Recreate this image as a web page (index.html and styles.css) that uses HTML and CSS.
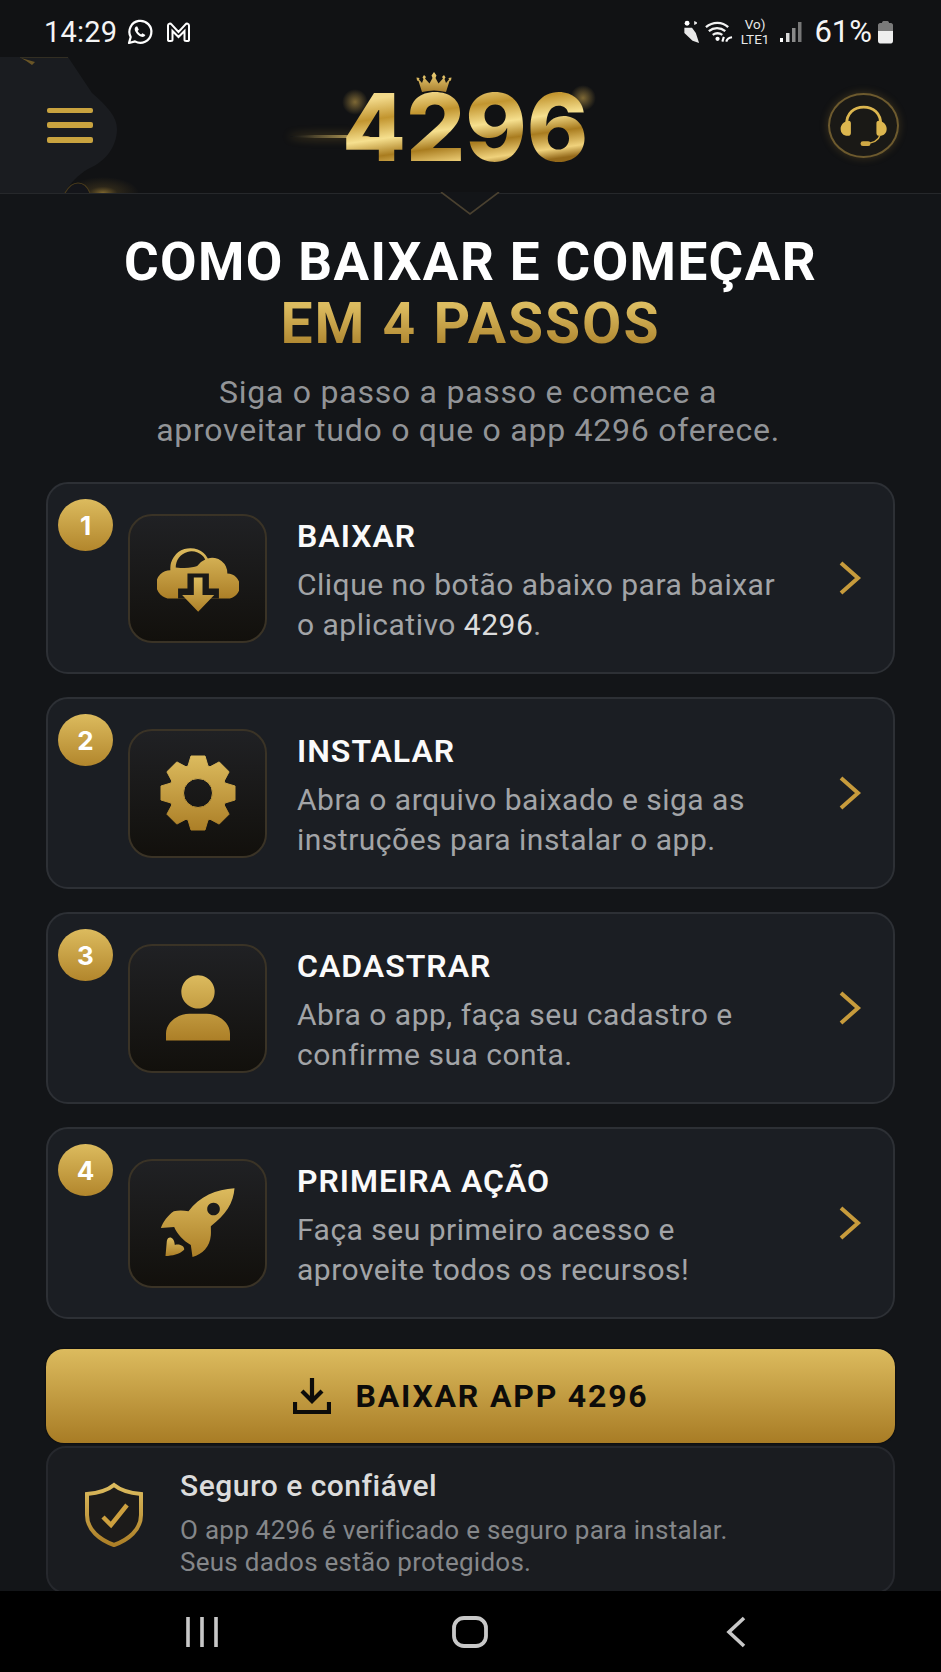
FILE: index.html
```html
<!DOCTYPE html>
<html lang="pt">
<head>
<meta charset="utf-8">
<title>4296</title>
<link rel="stylesheet" href="styles.css">
</head>
<body>
<svg class="defs" aria-hidden="true"><defs>
<linearGradient id="gold" x1="0" y1="0" x2="0" y2="1"><stop offset="0" stop-color="#dcbb5e"/><stop offset="1" stop-color="#ac7f27"/></linearGradient>
<linearGradient id="goldbright" x1="0" y1="0" x2="0" y2="1"><stop offset="0" stop-color="#f0d278"/><stop offset="1" stop-color="#a87f2e"/></linearGradient>
<radialGradient id="glow"><stop offset="0" stop-color="#d9ad45" stop-opacity=".55"/><stop offset=".4" stop-color="#b98f35" stop-opacity=".16"/><stop offset="1" stop-color="#b98f35" stop-opacity="0"/></radialGradient>
</defs></svg>
<div class="page">
  <div class="status">
    <div class="status-group">
      <span class="clock">14:29</span>
      <svg class="st-wa" viewBox="0 0 28 28"><path d="M3 25l1.700-6A11 11 0 1 1 9 23.400z" fill="none" stroke="#fff" stroke-width="2.200" stroke-linejoin="round"/><path d="M10 8.500c-1.500 1-1.700 3-.6 5 1.300 2.500 3.500 4.500 6 5.300 1.800.5 3.400-.3 4-1.800l-3-1.800-1.300 1.300c-1.500-.7-2.800-2-3.500-3.500l1.200-1.300-1.500-3.200z" fill="#fff"/></svg>
      <svg class="st-m" viewBox="0 0 26 22"><path d="M2.500 19V4.500C2.500 2.500 5 2 6 3.500L13 11l7-7.500c1-1.500 3.500-1 3.500 1V19c0 1-1.200 1-1.800 1h-1c-1 0-1.700-.3-1.700-1.200V10l-6 6-6-6v8.800c0 .9-.7 1.200-1.700 1.200h-1c-.6 0-1.800 0-1.800-1z" fill="none" stroke="#fff" stroke-width="2"/></svg>
    </div>
    <div class="status-group right">
      <svg class="st-hand" viewBox="0 0 16 22"><circle cx="3.500" cy="3" r="2.200" fill="#fff"/><path d="M10 1l2.500 1v1.500L10 4.500zM1 7h7l3.500 5 3 9-6-2-7.500-7z" fill="#e8e8e8"/></svg>
      <svg class="st-wifi" viewBox="0 0 30 24"><path d="M2 7c7-6 17-6 23 0M5 11c5-4 12-4 17 0M9 15c3-2 7-2 10 0" fill="none" stroke="#f2f2f2" stroke-width="2.400"/><circle cx="14" cy="19" r="2.200" fill="#fff"/><path d="M19 22l1.500-5M23 22c1-3 2-4 6-4.500" fill="none" stroke="#fff" stroke-width="2.200"/></svg>
      <span class="volte"><span>Vo)</span><span>LTE1</span></span>
      <svg class="st-signal" viewBox="0 0 24 22"><rect x="1" y="17" width="3" height="4" fill="#fff"/><rect x="7" y="12" width="3.500" height="9" fill="#d8d8d8"/><rect x="13" y="7" width="3.500" height="14" fill="#8a8a8a"/><rect x="19" y="1" width="3.500" height="20" fill="#777"/></svg>
      <span class="pct">61%</span>
      <svg class="st-batt" viewBox="0 0 17 24"><path d="M5 3c0-1 .5-2 1.500-2h4c1 0 1.500 1 1.500 2h2c1 0 2 1 2 2v6H1V5c0-1 1-2 2-2z" fill="#7a7a7a"/><path d="M1 11h15v10c0 1.500-1 2.500-2 2.500H3c-1 0-2-1-2-2.500z" fill="#eee"/></svg>
    </div>
  </div>

  <header class="header">
    <svg class="hex" viewBox="0 0 140 136"><path d="M0 0H68L92 36C108 50 117 60 117 72C117 90 105 105 88 112C78 118 70 126 65 136H0z" fill="#1a1c20"/><path d="M20 0H68" stroke="#3b3525" stroke-width="1.500" fill="none"/><path d="M21 1q6 3 11 7l3-3z" fill="#6a5526"/><ellipse cx="103" cy="136" rx="36" ry="16" fill="url(#glow)"/><path d="M65 136c4-7 9-10 13-10 6 0 10 5 12 10z" fill="#14151a"/><path d="M65 136c4-7 9-10 13-10 6 0 10 5 12 10" fill="none" stroke="#4a3c1c" stroke-width="1.200"/></svg>
    <button class="burger"><i></i><i></i><i></i></button>
    <div class="logo">
      <span class="spark spark-a"></span>
      <span class="spark spark-b"></span>
      <span class="flare"></span>
      <svg class="crown" viewBox="0 0 36 21"><path d="M18 0l2.500 3.500L19.500 6l3 5.500L27 6.500 26 5l2-2 1.500 2.500L28.500 7l1.500 4 3-3.500-.5-1.500 3-.5-.5 3-1.500.5L30 20q-12-3-24 0L2.500 9 1 8.500l-.500-3 3 .5-.5 1.500 3 3.500 1.500-4L6.500 5.500 8 3l2 2-1 1.500 4.500 5L16.500 6l-1-2.500z" fill="url(#goldbright)"/></svg>
      <span class="logo-text">4296</span>
    </div>
    <div class="support">
      <svg viewBox="503 277 215 196"><path d="M556 372C556 335 580 316 611 316C642 316 666 335 666 372" fill="none" stroke="#dcb64f" stroke-width="9"/><path d="M560 360c-14 3-23 15-23 26 0 12 8 22 23 22 8 0 10-4 10-10v-30c0-6-4-10-10-8zM662 360c14 3 23 15 23 26 0 12-8 22-23 22-8 0-10-4-10-10v-30c0-6 4-10 10-8z" fill="#dcb64f"/><path d="M664 405c-5 18-25 27-50 28" fill="none" stroke="#d0a945" stroke-width="5"/><rect x="601" y="426" width="32" height="15" rx="7.500" fill="#d0a945"/></svg>
    </div>
    <svg class="notch" viewBox="0 0 60 26"><path d="M2 0L30 22L58 0" fill="#131518"/><path d="M1 0L30 22L59 0" fill="none" stroke="#4a4130" stroke-width="1.600"/></svg>
  </header>

  <main class="main">
    <h1 class="title">COMO BAIXAR E COMEÇAR<span class="title-gold">EM 4 PASSOS</span></h1>
    <p class="subtitle">Siga o passo a passo e comece a<br>aproveitar tudo o que o app 4296 oferece.</p>

    <section class="steps">
      <article class="step">
        <span class="badge">1</span>
        <div class="tile">
          <svg class="ic-cloud" viewBox="380 225 245 200"><path fill="url(#gold)" d="M420 300a60 60 0 0 1 112-35 45 45 0 0 1 58 45 35 35 0 0 1 0 75H420a40 40 0 0 1 0-85z"/><path fill="#1d1c1a" d="M436 292a47 47 0 0 1 88-24q-15 6-24 20c-12 4-30 8-64 4z"/><path fill="#1a1917" d="M443 355h28v-45h64v45h30v30h-122z"/><path fill="url(#gold)" d="M490 322h26v52h35l-48 50-48-50h35z"/></svg>
        </div>
        <div class="step-text">
          <h2>BAIXAR</h2>
          <p>Clique no botão abaixo para baixar<br>o aplicativo <b>4296</b>.</p>
        </div>
        <svg class="chev" viewBox="0 0 24 36"><path d="M3 3l17 15L3 33" fill="none" stroke="#c79b3c" stroke-width="4"/></svg>
      </article>

      <article class="step">
        <span class="badge">2</span>
        <div class="tile">
          <svg class="ic-gear" viewBox="-38 -38 76 76"><path fill="url(#gold)" fill-rule="evenodd" stroke="url(#gold)" stroke-width="1" stroke-linejoin="round" d="M-10-27L-7-37H7L10-27L12-26.200L21.200-31.100L31.100-21.200L26.200-12L27-10L37-7V7L27 10L26.200 12L31.100 21.200L21.200 31.100L12 26.200L10 27L7 37H-7L-10 27L-12 26.200L-21.200 31.100L-31.100 21.200L-26.200 12L-27 10L-37 7V-7L-27-10L-26.200-12L-31.100-21.200L-21.200-31.100L-12-26.200zM0-14.500a14.500 14.500 0 1 0 0 29a14.500 14.500 0 1 0 0-29z"/></svg>
        </div>
        <div class="step-text">
          <h2>INSTALAR</h2>
          <p>Abra o arquivo baixado e siga as<br>instruções para instalar o app.</p>
        </div>
        <svg class="chev" viewBox="0 0 24 36"><path d="M3 3l17 15L3 33" fill="none" stroke="#c79b3c" stroke-width="4"/></svg>
      </article>

      <article class="step">
        <span class="badge">3</span>
        <div class="tile">
          <svg class="ic-person" viewBox="407 852 192 197"><path fill="url(#gold)" d="M503 852a50 50 0 1 1-.100 0zM407 1048v-20c0-38 40-60 70-60h52c30 0 70 22 70 60v20z"/></svg>
        </div>
        <div class="step-text">
          <h2>CADASTRAR</h2>
          <p>Abra o app, faça seu cadastro e<br>confirme sua conta.</p>
        </div>
        <svg class="chev" viewBox="0 0 24 36"><path d="M3 3l17 15L3 33" fill="none" stroke="#c79b3c" stroke-width="4"/></svg>
      </article>

      <article class="step">
        <span class="badge">4</span>
        <div class="tile">
          <svg class="ic-rocket" viewBox="388 205 224 210"><path fill="url(#gold)" fill-rule="evenodd" d="M611 206c-55 3-105 25-138 69-15-3-30-4-44 0-18 12-32 32-39 50l40-3c8 20 28 42 50 54l5 36c30-8 52-30 55-65 1-10 0-15 0-27 45-35 68-70 71-114zM548 249a19 19 0 1 0 .100 0z"/><path fill="url(#gold)" d="M404 409l4-45c3-16 22-14 24 12 14-5 30 4 28 14-14 14-36 18-56 19z"/></svg>
        </div>
        <div class="step-text">
          <h2>PRIMEIRA AÇÃO</h2>
          <p>Faça seu primeiro acesso e<br>aproveite todos os recursos!</p>
        </div>
        <svg class="chev" viewBox="0 0 24 36"><path d="M3 3l17 15L3 33" fill="none" stroke="#c79b3c" stroke-width="4"/></svg>
      </article>
    </section>

    <button class="cta">
      <svg viewBox="0 0 38 38"><path d="M19 1v22M9 14l10 10 10-10" fill="none" stroke="#0d0c0a" stroke-width="4.200"/><path d="M2 25v10h34V25" fill="none" stroke="#0d0c0a" stroke-width="4.200"/></svg>
      <span>BAIXAR APP 4296</span>
    </button>

    <section class="safe">
      <svg class="shield" viewBox="0 0 60 66"><path d="M30 3C24 8 14 11 3 12V33C3 48 16 58 30 63C44 58 57 48 57 33V12C46 11 36 8 30 3z" fill="#1c1b1a" stroke="url(#gold)" stroke-width="4"/><path d="M19 35l8 8 16-20" fill="none" stroke="#cda03f" stroke-width="4.500"/></svg>
      <div class="safe-text">
        <h3>Seguro e confiável</h3>
        <p>O app 4296 é verificado e seguro para instalar.<br>Seus dados estão protegidos.</p>
      </div>
    </section>
  </main>

  <nav class="navbar">
    <svg class="nav-recent" viewBox="0 0 34 32"><path d="M3 1v30M17 1v30M31 1v30" stroke="#c8c8c8" stroke-width="3.600" fill="none"/></svg>
    <svg class="nav-home" viewBox="0 0 36 32"><rect x="2" y="2" width="32" height="28" rx="10" fill="none" stroke="#c8c8c8" stroke-width="3.800"/></svg>
    <svg class="nav-back" viewBox="0 0 22 32"><path d="M19 2L4 16l15 14" fill="none" stroke="#c8c8c8" stroke-width="3.600"/></svg>
  </nav>
</div>
</body>
</html>
```

FILE: styles.css
```css
* { box-sizing: border-box; margin: 0; padding: 0; }
html, body { background: #131518; }
body { font-family: Roboto, "Liberation Sans", sans-serif; color: #fff; }
.defs { display: block; width: 0; height: 0; }
.page { width: 941px; height: 1672px; display: flex; flex-direction: column; overflow: hidden; background: #131518; }

.status { height: 57px; flex: none; display: flex; justify-content: space-between; align-items: center; padding: 6px 47px 0 44px; background: #111214; }
.status-group { display: flex; align-items: center; }
.clock { font-size: 29px; letter-spacing: .2px; color: #f4f4f4; }
.st-wa { width: 28px; height: 28px; margin-left: 9px; }
.st-m { width: 27px; height: 22px; margin-left: 11px; }
.st-hand { width: 18px; height: 24px; }
.st-wifi { width: 29px; height: 24px; margin-left: 3px; }
.volte { display: flex; flex-direction: column; align-items: center; font-size: 13.500px; line-height: 15px; margin-left: 8px; color: #e8e8e8; }
.st-signal { width: 24px; height: 22px; margin-left: 10px; }
.pct { font-size: 31px; margin-left: 11px; color: #f4f4f4; }
.st-batt { width: 17px; height: 24px; margin-left: 5px; }

.header { position: relative; height: 137px; flex: none; display: flex; align-items: center; justify-content: space-between; padding: 0 42px 0 47px; background: #111214; border-bottom: 1px solid #26282b; }
.hex { position: absolute; left: 0; top: 0; width: 140px; height: 136px; }
.burger { position: relative; width: 46px; height: 35px; background: none; border: 0; display: flex; flex-direction: column; justify-content: space-between; }
.burger i { display: block; height: 5.500px; border-radius: 2px; background: #c9a33f; }
.logo { position: absolute; left: 342px; top: 0; width: 248px; height: 136px; }
.crown { position: absolute; left: 74px; top: 15px; width: 36px; height: 21px; }
.spark { position: absolute; width: 26px; height: 26px; border-radius: 50%; background: radial-gradient(rgba(215,175,80,.55), rgba(215,175,80,0) 70%); }
.spark-a { left: 0; top: 32px; }
.spark-b { left: 228px; top: 28px; }
.flare { position: absolute; left: -52px; top: 78px; width: 80px; height: 3px; border-radius: 50%; background: linear-gradient(90deg, rgba(220,175,75,0), rgba(240,205,110,.9)); box-shadow: 0 0 8px 2px rgba(210,165,60,.22); }
.logo-text { position: absolute; left: 0; top: 2px; font-family: Inter, "DejaVu Sans", sans-serif; font-weight: 800; font-size: 93px; line-height: 136px; color: transparent; background: linear-gradient(172deg, #f2d98a 26%, #c2952f 38%, #f6e08f 50%, #a97c1f 60%, #f0d27c 70%, #94691a 76%); -webkit-background-clip: text; background-clip: text; }
.support { position: relative; width: 71px; height: 65px; border-radius: 50%; border: 2px solid #6d5a2e; background: #1a1916; box-shadow: 0 0 8px rgba(190,150,60,.25); display: flex; align-items: center; justify-content: center; }
.support svg { width: 100%; height: 100%; }
.notch { position: absolute; left: 440px; top: 135px; width: 60px; height: 26px; }

.main { flex: 1; min-height: 0; overflow: hidden; padding: 37px 46px 0 46px; }
.title { font-family: Roboto, sans-serif; font-size: 53px; line-height: 62px; font-weight: 700; letter-spacing: 1.400px; text-align: center; color: #fff; }
.title-gold { display: block; font-size: 57px; letter-spacing: 2px; color: transparent; background: linear-gradient(#dcbc60 20%, #b28a33 80%); -webkit-background-clip: text; background-clip: text; }
.subtitle { margin-top: 18px; padding-right: 5px; font-size: 32px; line-height: 38px; letter-spacing: .75px; text-align: center; color: #929497; }

.steps { margin-top: 33px; display: flex; flex-direction: column; gap: 23px; }
.step { position: relative; height: 192px; display: flex; align-items: center; padding: 0 31px 0 80px; background: #1b1e23; border: 2px solid #2d3035; border-radius: 22px; }
.badge { position: absolute; left: 10px; top: 15px; width: 55px; height: 52px; border-radius: 50%; display: flex; align-items: center; justify-content: center; font-family: Inter, Roboto, sans-serif; font-size: 26px; font-weight: 700; background: linear-gradient(#dcbb5e, #b2862c); }
.tile { width: 139px; height: 129px; flex: none; display: flex; align-items: center; justify-content: center; border: 2px solid #3a3326; border-radius: 24px; background: linear-gradient(#202124, #12100c); }
.ic-cloud { width: 82px; height: 67px; }
.ic-gear { width: 76px; height: 76px; }
.ic-person { width: 64px; height: 66px; }
.ic-rocket { width: 75px; height: 70px; }
.step-text { flex: 1; margin-left: 30px; padding-top: 5px; }
.step-text h2 { font-family: Roboto, sans-serif; font-size: 32px; line-height: 40px; font-weight: 600; letter-spacing: 1px; color: #fafafa; }
.step-text p { margin-top: 9px; font-size: 30px; line-height: 40px; letter-spacing: .5px; color: #a2a4a7; }
.step-text b { font-weight: 400; color: #dcdcdc; }
.chev { width: 24px; height: 36px; flex: none; }

.cta { margin-top: 30px; width: 100%; height: 94px; display: flex; align-items: center; justify-content: center; gap: 25px; border: 0; border-radius: 18px; background: linear-gradient(#dcbb5e, #a87c25); box-shadow: 0 0 2px #000; color: #0d0c0a; }
.cta svg { width: 38px; height: 38px; }
.cta span { font-family: Roboto, sans-serif; font-size: 32px; font-weight: 700; letter-spacing: 1.800px; }

.safe { margin-top: 3px; height: 148px; display: flex; align-items: center; padding: 0 20px 0 36px; background: #1a1c20; border: 2px solid #26282d; border-radius: 20px; }
.shield { width: 60px; height: 66px; flex: none; margin-bottom: 10px; }
.safe-text { margin-left: 36px; padding-top: 6px; }
.safe-text h3 { font-size: 30px; line-height: 36px; font-weight: 500; letter-spacing: .5px; color: #dcdcdc; }
.safe-text p { margin-top: 10px; font-size: 26px; line-height: 32px; letter-spacing: .27px; color: #85878a; }

.navbar { height: 81px; flex: none; display: flex; align-items: center; padding: 0 0 0 185px; background: #000; }
.nav-recent { width: 34px; height: 32px; }
.nav-home { width: 36px; height: 32px; margin-left: 233px; }
.nav-back { width: 22px; height: 32px; margin-left: 237px; }
```
